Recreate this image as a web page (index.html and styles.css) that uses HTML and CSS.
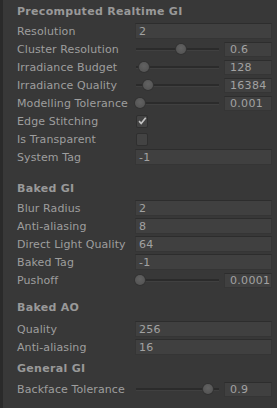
FILE: index.html
```html
<!DOCTYPE html>
<html lang="en">
<head>
  <meta charset="UTF-8">
  <title>Lighting - GI Settings</title>
  <link rel="stylesheet" href="styles.css">
</head>
<body>

  <div class="panel">

    <div class="section">
      <div class="header">Precomputed Realtime GI</div>
      <div class="row"><span class="label">Resolution</span><div class="field">2</div></div>
      <div class="row">
        <span class="label">Cluster Resolution</span>
        <div class="slider"><div class="track"><span class="thumb" style="left: 40px"></span></div><div class="field num">0.6</div></div>
      </div>
      <div class="row">
        <span class="label">Irradiance Budget</span>
        <div class="slider"><div class="track"><span class="thumb" style="left: 3px"></span></div><div class="field num">128</div></div>
      </div>
      <div class="row">
        <span class="label">Irradiance Quality</span>
        <div class="slider"><div class="track"><span class="thumb" style="left: 7px"></span></div><div class="field num">16384</div></div>
      </div>
      <div class="row">
        <span class="label">Modelling Tolerance</span>
        <div class="slider"><div class="track"><span class="thumb" style="left: -1px"></span></div><div class="field num">0.001</div></div>
      </div>
      <div class="row">
        <span class="label">Edge Stitching</span>
        <div class="check on">
          <svg width="12" height="12" viewBox="0 0 12 12"><path d="M2.5 6.2 L5 9 L10.5 2" fill="none" stroke="#c4c4c4" stroke-width="2"/></svg>
        </div>
      </div>
      <div class="row"><span class="label">Is Transparent</span><div class="check"></div></div>
      <div class="row"><span class="label">System Tag</span><div class="field">-1</div></div>
    </div>

    <div class="section baked">
      <div class="header">Baked GI</div>
      <div class="row"><span class="label">Blur Radius</span><div class="field">2</div></div>
      <div class="row"><span class="label">Anti-aliasing</span><div class="field">8</div></div>
      <div class="row"><span class="label">Direct Light Quality</span><div class="field">64</div></div>
      <div class="row"><span class="label">Baked Tag</span><div class="field">-1</div></div>
      <div class="row">
        <span class="label">Pushoff</span>
        <div class="slider"><div class="track"><span class="thumb" style="left: -1px"></span></div><div class="field num">0.0001</div></div>
      </div>
    </div>

    <div class="section ao">
      <div class="header">Baked AO</div>
      <div class="row"><span class="label">Quality</span><div class="field">256</div></div>
      <div class="row"><span class="label">Anti-aliasing</span><div class="field">16</div></div>
    </div>

    <div class="section general">
      <div class="header">General GI</div>
      <div class="row">
        <span class="label">Backface Tolerance</span>
        <div class="slider"><div class="track"><span class="thumb" style="left: 67px"></span></div><div class="field num">0.9</div></div>
      </div>
    </div>

  </div>

</body>
</html>
```

FILE: styles.css
```css
:root {
  --bg: #383838;
  --edge: #2a2a2a;
  --text: #9e9e9e;
  --head: #999999;
  --field: #404040;
  --field-border: #2d2d2d;
}

body {
  margin: 0;
  height: 408px;
  overflow: hidden;
  background-color: var(--bg);
  font-family: 'DejaVu Sans', 'Liberation Sans', sans-serif;
  font-size: 11px;
  color: var(--text);
}

.panel {
  height: 100%;
  border-left: 3px solid var(--edge);
  padding: 3px 5px 0 14px;
}

.header {
  height: 18px;
  line-height: 18px;
  font-weight: bold;
  letter-spacing: 0.3px;
  color: var(--head);
  margin-bottom: 1px;
}

.section.baked {
  margin-top: 14px;
}

.section.ao {
  margin-top: 10px;
}

.section.ao .header {
  margin-bottom: 3px;
}

.section.general {
  margin-top: 4px;
}

.section.general .header {
  margin-bottom: 2px;
}

.row {
  display: grid;
  grid-template-columns: 118px 1fr;
  align-items: center;
  height: 18px;
}

.label {
  letter-spacing: 0.1px;
  white-space: nowrap;
}

.field {
  height: 16px;
  line-height: 15px;
  padding-left: 3px;
  background-color: var(--field);
  border: 1px solid #353535;
  border-top-color: var(--field-border);
  box-sizing: border-box;
  letter-spacing: 0.3px;
  color: #a2a2a2;
}

.field.num {
  height: 15px;
  line-height: 13px;
  padding-left: 5px;
}

.slider {
  display: grid;
  grid-template-columns: 1fr 48px;
  gap: 5px;
  align-items: center;
}

.track {
  position: relative;
  height: 2px;
  margin-left: 1px;
  background-color: #2b2b2b;
  border-bottom: 1px solid #404040;
}

.thumb {
  position: absolute;
  top: -4px;
  width: 10px;
  height: 10px;
  border-radius: 50%;
  background: radial-gradient(circle at 50% 40%, #626262, #505050);
  box-shadow: 0 0 0 1px #333;
}

.check {
  width: 12px;
  height: 13px;
  margin-left: 1px;
  box-sizing: border-box;
  background-color: #434343;
  border: 1px solid #2f2f2f;
  border-radius: 2px;
  display: flex;
  align-items: center;
  justify-content: center;
}

.check svg {
  display: block;
}
```
